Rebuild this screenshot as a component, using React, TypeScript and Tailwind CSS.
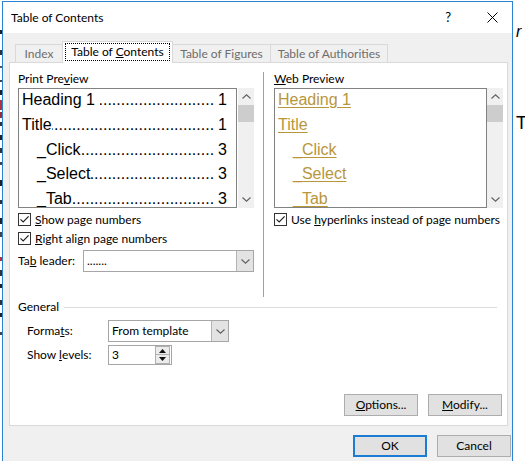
import React from "react";

const docMarks: [number, number, string][] = [
  [30, 4, "#222"],
  [50, 5, "#333"],
  [66, 2, "#555"],
  [80, 2, "#444"],
  [90, 5, "#222"],
  [100, 10, "#b03040"],
  [112, 6, "#9a2a3a"],
  [122, 4, "#333"],
  [135, 5, "#222"],
  [148, 5, "#333"],
  [162, 3, "#444"],
  [180, 6, "#222"],
  [200, 4, "#333"],
  [218, 6, "#222"],
  [232, 5, "#444"],
  [257, 4, "#b03040"],
  [270, 6, "#333"],
  [284, 4, "#222"],
  [300, 5, "#333"],
  [313, 4, "#222"],
  [332, 3, "#444"],
];

function DocLeft() {
  let y = 0;
  return (
    <div className="w-[2px] shrink-0 flex flex-col">
      {docMarks.map(([top, h, c], i) => {
        const gap = top - y;
        y = top + h;
        return (
          <div key={i} className="shrink-0" style={{ marginTop: gap, height: h, backgroundColor: c }} />
        );
      })}
    </div>
  );
}

function DocRight() {
  return (
    <div className="w-[12px] shrink-0 overflow-hidden flex flex-col font-['Liberation_Sans',sans-serif] text-black">
      <div className="h-[24px] shrink-0" />
      <div className="italic text-[16px] leading-[16px] pl-[3px]">r</div>
      <div className="h-[74px] shrink-0" />
      <div className="text-[18px] leading-[18px] pl-[3px]">T</div>
    </div>
  );
}

function ChevUp() {
  return (
    <svg width="9" height="5" viewBox="0 0 9 5">
      <path d="M0.5 4.5 L4.5 0.8 L8.5 4.5" fill="none" stroke="#606060" strokeWidth="1.1" />
    </svg>
  );
}

function ChevDown() {
  return (
    <svg width="9" height="5" viewBox="0 0 9 5">
      <path d="M0.5 0.5 L4.5 4.2 L8.5 0.5" fill="none" stroke="#606060" strokeWidth="1.1" />
    </svg>
  );
}

function Scroll() {
  return (
    <div className="w-[16px] h-[120px] bg-[#f0f0f0] flex flex-col shrink-0">
      <div className="h-[17px] flex items-center justify-center">
        <ChevUp />
      </div>
      <div className="h-[17px] bg-[#cdcdcd]" />
      <div className="flex-1" />
      <div className="h-[17px] flex items-center justify-center">
        <ChevDown />
      </div>
    </div>
  );
}

function Check() {
  return (
    <div className="w-[13px] h-[13px] border border-[#333333] bg-white flex items-center justify-center shrink-0">
      <svg width="11" height="11" viewBox="0 0 11 11">
        <path d="M1.5 5.3 L4.2 8 L9.6 2.4" fill="none" stroke="#222" strokeWidth="1.2" />
      </svg>
    </div>
  );
}

const printRows: { t: string; n: string; indent: boolean; space: boolean }[] = [
  { t: "Heading 1", n: "1", indent: false, space: true },
  { t: "Title", n: "1", indent: false, space: false },
  { t: "_Click", n: "3", indent: true, space: false },
  { t: "_Select", n: "3", indent: true, space: false },
  { t: "_Tab", n: "3", indent: true, space: false },
];

const DOTS = ".".repeat(90);

function PrintPreview() {
  return (
    <div className="flex h-[120px]">
      <div className="w-[219px] h-[120px] border border-[#828282] bg-white flex flex-col overflow-hidden font-['Liberation_Sans',sans-serif] text-[16px] text-black">
        {printRows.map((r) => (
          <div
            key={r.t}
            className={`flex h-[24.75px] leading-[21px] shrink-0 pr-[9px] whitespace-pre ${r.indent ? "pl-[18px]" : "pl-[3px]"}`}
          >
            <span className="shrink-0">{r.t}</span>
            <span className={`flex-1 overflow-hidden whitespace-nowrap ${r.space ? "ml-[5px]" : ""}`} dir="rtl">
              {DOTS}
            </span>
            <span className="pl-[4px] shrink-0">{r.n}</span>
          </div>
        ))}
      </div>
      <div className="w-[1px]" />
      <Scroll />
    </div>
  );
}

function WebPreview() {
  return (
    <div className="flex h-[120px]">
      <div className="w-[213px] h-[120px] border border-[#828282] bg-white flex flex-col overflow-hidden font-['Liberation_Sans',sans-serif] text-[16px] text-[#b8963c]">
        {printRows.map((r) => (
          <div
            key={r.t}
            className={`flex h-[24.75px] leading-[21px] shrink-0 whitespace-pre ${r.indent ? "pl-[18px]" : "pl-[3px]"}`}
          >
            <span className="underline decoration-[#b8963c] underline-offset-[2px]">{r.t}</span>
          </div>
        ))}
      </div>
      <Scroll />
    </div>
  );
}

function Combo({ text, wide }: { text: string; wide: boolean }) {
  return (
    <div className={`flex h-[22px] border border-[#a6a6a6] bg-white shrink-0 ${wide ? "w-[171px]" : "w-[121px]"}`}>
      <div className="flex-1 pl-[3px] leading-[20px] text-black">{text}</div>
      <div className="w-[17px] bg-[#e3e3e3] border-l border-[#b4b4b4] flex items-center justify-center">
        <ChevDown />
      </div>
    </div>
  );
}

function Spin() {
  return (
    <div className="flex h-[20px] w-[64px] border border-[#a6a6a6] bg-white shrink-0">
      <div className="flex-1 pl-[3px] leading-[18px] text-black">3</div>
      <div className="w-[15px] flex flex-col mr-[1px]">
        <div className="h-[9px] bg-[#ececec] border border-[#b0b0b0] flex items-center justify-center">
          <svg width="7" height="4" viewBox="0 0 7 4">
            <path d="M0 4 L3.5 0 L7 4 Z" fill="#111" />
          </svg>
        </div>
        <div className="h-[9px] bg-[#ececec] border border-[#b0b0b0] border-t-0 flex items-center justify-center">
          <svg width="7" height="4" viewBox="0 0 7 4">
            <path d="M0 0 L3.5 4 L7 0 Z" fill="#111" />
          </svg>
        </div>
      </div>
    </div>
  );
}

function Button({ children, primary }: { children: React.ReactNode; primary?: boolean }) {
  return (
    <div
      className={`w-[74px] h-[22px] flex items-center justify-center bg-[#e1e1e1] text-black ${
        primary ? "border-2 border-[#1c7bd2]" : "border border-[#adadad]"
      }`}
    >
      {children}
    </div>
  );
}

export default function App() {
  return (
    <div className="w-[525px] h-[461px] overflow-hidden bg-white flex font-['Lato',sans-serif] text-[12px] text-black">
      <DocLeft />
      <div className="mt-[1px] w-[511px] shrink-0 border-l border-r border-t border-[#2b84d3] flex flex-col">
        {/* Title bar */}
        <div className="h-[31px] shrink-0 bg-white flex items-center pl-[8px] pr-[14px]">
          <span>Table of Contents</span>
          <span className="ml-auto text-[13px]">?</span>
          <svg className="ml-[36px]" width="11" height="11" viewBox="0 0 11 11">
            <path d="M0.5 0.5 L10.5 10.5 M10.5 0.5 L0.5 10.5" stroke="#000" strokeWidth="1" />
          </svg>
        </div>

        {/* Body */}
        <div className="flex-1 bg-[#f0f0f0] pt-[8px] flex flex-col">
          {/* Tabs */}
          <div className="flex items-end h-[21px] pl-[12px] shrink-0">
            <div className="h-[18px] w-[48px] border border-b-0 border-[#d9d9d9] bg-[#f0f0f0] text-[#6d6d6d] flex items-center justify-center">
              Index
            </div>
            <div className="relative z-10 -ml-[1px] -mb-[1px] h-[22px] w-[111px] border border-b-0 border-[#d9d9d9] bg-white flex justify-center pt-[1px]">
              <div className="h-[18px] border border-dotted border-black px-[5px] leading-[16px]">
                Table of <span className="underline">C</span>ontents
              </div>
            </div>
            <div className="-ml-[1px] h-[18px] w-[99px] border border-b-0 border-[#d9d9d9] bg-[#f0f0f0] text-[#6d6d6d] flex items-center justify-center">
              Table of Figures
            </div>
            <div className="-ml-[1px] h-[18px] w-[118px] border border-b-0 border-[#d9d9d9] bg-[#f0f0f0] text-[#6d6d6d] flex items-center justify-center">
              Table of Authorities
            </div>
          </div>

          {/* Panel */}
          <div className="ml-[6px] w-[499px] h-[364px] shrink-0 bg-white border border-[#d9d9d9] flex flex-col">
            <div className="flex pl-[8px]">
              {/* Left column */}
              <div className="w-[236px] flex flex-col shrink-0">
                <div className="mt-[8px] h-[16px] leading-[16px]">
                  Print Pre<span className="underline">v</span>iew
                </div>
                <div className="mt-[1px]">
                  <PrintPreview />
                </div>
                <div className="mt-[2px] h-[19px] flex items-center gap-[4px]">
                  <Check />
                  <span>
                    <span className="underline">S</span>how page numbers
                  </span>
                </div>
                <div className="h-[19px] flex items-center gap-[4px]">
                  <Check />
                  <span>
                    <span className="underline">R</span>ight align page numbers
                  </span>
                </div>
                <div className="mt-[2px] h-[22px] flex items-center">
                  <span className="w-[65px] shrink-0">
                    Ta<span className="underline">b</span> leader:
                  </span>
                  <Combo text="......." wide />
                </div>
              </div>

              {/* Divider */}
              <div className="ml-[9px] mt-[9px] w-[1px] h-[225px] bg-[#a0a0a0] shrink-0" />

              {/* Right column */}
              <div className="ml-[10px] w-[229px] flex flex-col shrink-0">
                <div className="mt-[8px] h-[16px] leading-[16px]">
                  <span className="underline">W</span>eb Preview
                </div>
                <div className="mt-[1px]">
                  <WebPreview />
                </div>
                <div className="mt-[2px] h-[19px] flex items-center gap-[4px] whitespace-nowrap">
                  <Check />
                  <span>
                    Use <span className="underline">h</span>yperlinks instead of page numbers
                  </span>
                </div>
              </div>
            </div>

            {/* General */}
            <div className="mt-[2px] h-[16px] flex items-center pl-[8px] pr-[10px]">
              <span>General</span>
              <div className="flex-1 h-[1px] bg-[#dcdcdc] ml-[5px]" />
            </div>
            <div className="mt-[5px] h-[22px] flex items-center pl-[17px]">
              <span className="w-[81px] shrink-0">
                Forma<span className="underline">t</span>s:
              </span>
              <Combo text="From template" wide={false} />
            </div>
            <div className="mt-[3px] h-[20px] flex items-center pl-[17px]">
              <span className="w-[81px] shrink-0">
                Show <span className="underline">l</span>evels:
              </span>
              <Spin />
            </div>

            <div className="mt-auto mb-[9px] flex justify-end gap-[10px] pr-[5px]">
              <Button>
                <span>
                  <span className="underline">O</span>ptions...
                </span>
              </Button>
              <Button>
                <span>
                  <span className="underline">M</span>odify...
                </span>
              </Button>
            </div>
          </div>

          {/* Dialog buttons */}
          <div className="mt-[9px] flex justify-end gap-[10px] pr-[1px]">
            <Button primary>OK</Button>
            <Button>Cancel</Button>
          </div>
        </div>
      </div>
      <DocRight />
    </div>
  );
}
